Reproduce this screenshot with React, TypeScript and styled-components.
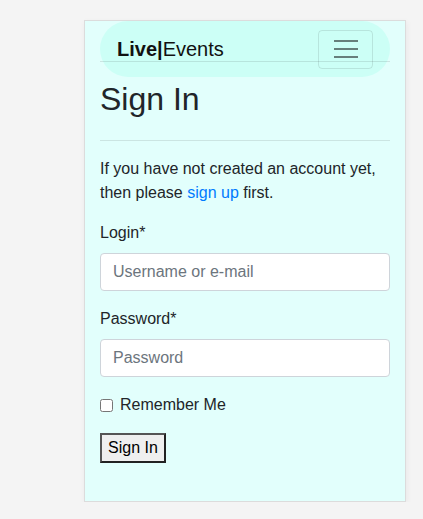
import React from "react";
import styled, { createGlobalStyle } from "styled-components";

const GlobalStyle = createGlobalStyle`
  body {
    margin: 0;
    background: #f4f4f4;
    font-family: "Liberation Sans", Arial, sans-serif;
    color: #212529;
    font-size: 16px;
    line-height: 24px;
  }
`;

export default function App() {
  return (
    <>
      <GlobalStyle />
      <Page>
        <Card>
          <Navbar>
            <Brand>
              <b>Live|</b>Events
            </Brand>
            <Toggler aria-label="Toggle navigation">
              <Bar />
              <Bar />
              <Bar />
            </Toggler>
          </Navbar>

          <Title>Sign In</Title>
          <Rule />

          <Intro>
            If you have not created an account yet, then please{" "}
            <Link href="#">sign up</Link> first.
          </Intro>

          <Field>
            <Label>Login*</Label>
            <Input placeholder="Username or e-mail" />
          </Field>

          <Field>
            <Label>Password*</Label>
            <Input type="password" placeholder="Password" />
          </Field>

          <CheckRow>
            <input type="checkbox" />
            Remember Me
          </CheckRow>

          <SubmitButton type="submit">Sign In</SubmitButton>
        </Card>
      </Page>
    </>
  );
}

const Page = styled.div`
  padding: 20px 0 0 84px;
`;

const Card = styled.div`
  width: 322px;
  box-sizing: border-box;
  background: #e2fffc;
  border: 1px solid #dcdcdc;
  padding: 0 15px 38px;
  box-shadow: 1px 2px 6px rgba(0, 0, 0, 0.05);
`;

const Navbar = styled.nav`
  position: relative;
  height: 56px;
  display: flex;
  align-items: center;
  justify-content: space-between;
  padding: 0 17px;
  background: #ccfff6;
  border-radius: 28px;

  &::after {
    content: "";
    position: absolute;
    left: 0;
    right: 0;
    top: 40px;
    border-top: 1px solid rgba(0, 0, 0, 0.1);
  }
`;

const Brand = styled.span`
  font-size: 20px;
  line-height: 30px;
  color: #111;
`;

const Toggler = styled.button`
  width: 55px;
  height: 39px;
  box-sizing: border-box;
  border: 1px solid rgba(0, 0, 0, 0.1);
  border-radius: 4px;
  background: transparent;
  display: flex;
  flex-direction: column;
  align-items: center;
  justify-content: center;
  gap: 6px;
  padding: 0;
`;

const Bar = styled.span`
  width: 24px;
  height: 2px;
  background: rgba(0, 0, 0, 0.5);
`;

const Title = styled.h1`
  margin: 0;
  padding-top: 3px;
  font-size: 32px;
  font-weight: 500;
  line-height: 38px;
`;

const Rule = styled.hr`
  margin: 22px 0 16px;
  border: 0;
  border-top: 1px solid rgba(0, 0, 0, 0.1);
`;

const Intro = styled.p`
  margin: 0 0 16px;
`;

const Link = styled.a`
  color: #007bff;
  text-decoration: none;
`;

const Field = styled.div`
  margin-bottom: 16px;
`;

const Label = styled.label`
  display: block;
  margin-bottom: 8px;
`;

const Input = styled.input`
  display: block;
  width: 100%;
  height: 38px;
  box-sizing: border-box;
  padding: 6px 12px;
  font-family: inherit;
  font-size: 16px;
  color: #495057;
  background: #fff;
  border: 1px solid #ced4da;
  border-radius: 4px;

  &::placeholder {
    color: #6c757d;
  }
`;

const CheckRow = styled.label`
  display: flex;
  align-items: center;
  gap: 7px;
  margin-bottom: 16px;

  input {
    margin: 0;
    width: 13px;
    height: 13px;
  }
`;

const SubmitButton = styled.button`
  height: 30px;
  padding: 0 6px;
  font-family: inherit;
  font-size: 16px;
  color: #000;
  background: #efefef;
  border: 2px solid;
  border-color: #555 #222 #222 #555;
`;
